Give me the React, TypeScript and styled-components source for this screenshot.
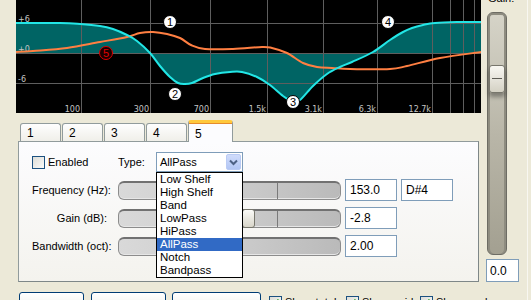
import React from 'react'
import styled, { createGlobalStyle, css } from 'styled-components'

const GlobalStyle = createGlobalStyle`
  html, body {
    margin: 0;
    padding: 0;
    background: #ece9d8;
  }
  body {
    font-family: 'Liberation Sans', Arial, sans-serif;
    font-size: 11px;
    color: #000;
    overflow: hidden;
  }
`

const Window = styled.div`
  display: flex;
  align-items: flex-start;
  width: 527px;
  height: 300px;
  overflow: hidden;
  border-right: 1px solid #f8f7f1;
  background: #ece9d8;
`
const Main = styled.div`
  display: flex;
  flex-direction: column;
  width: 481px;
  flex-shrink: 0;
`
const GraphBox = styled.svg`
  display: block;
  margin-left: 16px;
  width: 465px;
  height: 113px;
  background: #000;
`
const TabRow = styled.div`
  display: flex;
  align-items: flex-end;
  gap: 1px;
  height: 21px;
  margin: 7px 0 0 20px;
`
const Tab = styled.div<{ $active?: boolean }>`
  box-sizing: border-box;
  width: 41px;
  height: 18px;
  padding: 3px 0 0 6px;
  border: 1px solid #919b9c;
  border-bottom: none;
  border-radius: 3px 3px 0 0;
  background: linear-gradient(to bottom, #fefefe, #f0efe9);
  font-size: 12px;
  line-height: 13px;

  ${({ $active }) =>
    $active &&
    css`
      position: relative;
      z-index: 2;
      width: 45px;
      height: 22px;
      margin-bottom: -1px;
      padding-top: 5px;
      border-top: 3px solid #ffc83c;
      box-shadow: inset 0 1px 0 #e68b2c;
      background: #fcfcfe;
    `}
`
const Panel = styled.div`
  box-sizing: border-box;
  width: 461px;
  height: 141px;
  margin-left: 18px;
  padding: 10px 0 0 13px;
  border: 1px solid #919b9c;
  border-right-color: #7e8788;
  border-bottom-color: #7e8788;
  background: linear-gradient(to bottom, #fcfcfe, #f4f3ee);
`
const TopLine = styled.div`
  display: flex;
  align-items: center;
  height: 20px;
`
const CheckLabel = styled.label`
  display: flex;
  align-items: center;
  gap: 3px;
  width: 86px;
`
const Box = styled.span`
  position: relative;
  box-sizing: border-box;
  width: 13px;
  height: 13px;
  border: 1px solid #1c5180;
  background: linear-gradient(135deg, #dcdcd7, #fbfbf9);
  flex-shrink: 0;
`
const TypeLabel = styled.span`
  width: 38px;
`
const Select = styled.div`
  position: relative;
  box-sizing: border-box;
  display: flex;
  align-items: center;
  width: 87px;
  height: 20px;
  padding-left: 3px;
  border: 1px solid #7f9db9;
  background: #fff;
`
const SelectValue = styled.span`
  flex: 1;
`
const DropButton = styled.span`
  display: flex;
  align-items: center;
  justify-content: center;
  box-sizing: border-box;
  width: 15px;
  height: 16px;
  margin-right: 1px;
  border: 1px solid #bacbf4;
  border-radius: 2px;
  background: linear-gradient(to bottom, #d0dcfb, #b2c6f4);
`
const DropList = styled.ul`
  position: absolute;
  top: 19px;
  left: -1px;
  z-index: 5;
  box-sizing: border-box;
  width: 87px;
  margin: 0;
  padding: 0;
  list-style: none;
  border: 1px solid #000;
  background: #fff;
`
const DropItem = styled.li<{ $selected?: boolean }>`
  height: 13px;
  line-height: 13px;
  padding-left: 3px;
  font-size: 11.5px;
  ${({ $selected }) =>
    $selected &&
    css`
      background: #316ac5;
      color: #fff;
    `}
`
const Fields = styled.div`
  display: grid;
  grid-template-columns: 82px 223px 52px 52px;
  grid-auto-rows: 22px;
  column-gap: 4px;
  row-gap: 6px;
  margin-top: 7px;
  align-items: center;
`
const FieldLabel = styled.span`
  padding-right: 7px;
  text-align: right;
  white-space: nowrap;
`
const Track = styled.div<{ $mark?: boolean }>`
  position: relative;
  box-sizing: border-box;
  height: 19px;
  border: 1px solid #8c8c8c;
  border-top: 2px solid #717171;
  border-radius: 6px;
  background: linear-gradient(to right, #d9d9d9, #c9c9c9 60%, #bababa);
  box-shadow: inset 0 -1px 0 #e6e6e6;

  ${({ $mark }) =>
    $mark &&
    css`
      &::after {
        content: '';
        position: absolute;
        left: 158px;
        top: 0;
        bottom: 0;
        width: 1px;
        background: #7a7a7a;
      }
    `}
`
const Thumb = styled.div`
  position: absolute;
  top: -2px;
  left: 123px;
  z-index: 1;
  box-sizing: border-box;
  width: 13px;
  height: 19px;
  border: 1px solid #77766c;
  border-radius: 3px;
  background: linear-gradient(to bottom, #fbfbf8, #d8d5c9);
`
const Field = styled.div`
  box-sizing: border-box;
  height: 22px;
  padding: 3px 0 0 4px;
  border: 1px solid #7f9db9;
  background: #fff;
  font-size: 12px;
`
const Empty = styled.span``

const ButtonRow = styled.div`
  display: flex;
  align-items: flex-start;
  margin: 10px 0 0 19px;
  white-space: nowrap;
`
const Button = styled.button<{ $w: number; $gap?: number }>`
  box-sizing: border-box;
  flex-shrink: 0;
  width: ${({ $w }) => $w}px;
  height: 23px;
  margin-right: ${({ $gap }) => $gap ?? 7}px;
  padding: 0;
  border: 1px solid #003c74;
  border-radius: 3px;
  background: linear-gradient(to bottom, #ffffff, #f0f0ea 80%, #d6d0c5);
  font-family: inherit;
  font-size: 11px;
  color: #000;
`
const ShowCheck = styled.label<{ $w: number }>`
  display: flex;
  align-items: flex-start;
  gap: 3px;
  width: ${({ $w }) => $w}px;
  margin-top: 4px;
  flex-shrink: 0;
`
const Tick = styled.svg`
  position: absolute;
  left: 1px;
  top: 1px;
`

const Side = styled.div`
  display: flex;
  flex-direction: column;
  margin-left: 6px;
`
const GainLabel = styled.span`
  height: 13px;
  margin-top: -8px;
  padding-left: 1px;
  line-height: 13px;
`
const VTrack = styled.div`
  position: relative;
  box-sizing: border-box;
  width: 20px;
  height: 243px;
  margin-top: 7px;
  border: 1px solid #6d6c64;
  border-radius: 6px;
  background: linear-gradient(to bottom, #d6d4c8, #b9b6a8 50%, #a3a091);
  box-shadow: inset 2px 0 0 #8e8c80, inset -2px 0 0 #8e8c80, inset 0 2px 0 #8e8c80;
`
const VThumb = styled.div`
  position: absolute;
  top: 52px;
  left: 1px;
  box-sizing: border-box;
  width: 16px;
  height: 28px;
  border: 1px solid #77766c;
  border-radius: 3px;
  background: linear-gradient(to bottom, #f8f7f2, #d4d1c4);
  box-shadow: 0 4px 4px rgba(0, 0, 0, 0.35);

  &::after {
    content: '';
    position: absolute;
    left: 2px;
    right: 2px;
    top: 12px;
    height: 1px;
    background: #5d5c55;
  }
`
const ValueBox = styled.div`
  box-sizing: border-box;
  width: 33px;
  height: 23px;
  margin: 4px 0 0 -1px;
  padding: 4px 0 0 3px;
  border: 1px solid #7f9db9;
  background: #fff;
  font-size: 12px;
`

type Pt = [number, number]

const smooth = (pts: Pt[]) => {
  let d = `M${pts[0][0]},${pts[0][1]}`
  for (let i = 0; i < pts.length - 1; i++) {
    const p0 = pts[i - 1] || pts[i]
    const p1 = pts[i]
    const p2 = pts[i + 1]
    const p3 = pts[i + 2] || p2
    const c1x = p1[0] + (p2[0] - p0[0]) / 6
    const c1y = p1[1] + (p2[1] - p0[1]) / 6
    const c2x = p2[0] - (p3[0] - p1[0]) / 6
    const c2y = p2[1] - (p3[1] - p1[1]) / 6
    d += ` C${c1x.toFixed(1)},${c1y.toFixed(1)} ${c2x.toFixed(1)},${c2y.toFixed(1)} ${p2[0]},${p2[1]}`
  }
  return d
}

const total: Pt[] = [
  [16, 23], [60, 23], [80, 24], [100, 26], [113, 29], [127, 35], [137, 41], [150, 53],
  [160, 66], [170, 77], [178, 83], [185, 84], [192, 83], [203, 78], [215, 74], [230, 72],
  [242, 72], [257, 77], [270, 85], [283, 96], [292, 101], [300, 100], [313, 86], [327, 74],
  [340, 67], [352, 62], [373, 52], [390, 40], [403, 32], [412, 28], [423, 25], [435, 23],
  [457, 22], [481, 22],
]

const band: Pt[] = [
  [16, 52], [33, 51], [67, 48], [100, 42], [127, 37], [140, 33], [153, 32], [167, 34],
  [180, 38], [191, 45], [205, 49], [233, 49], [262, 47], [272, 48], [287, 53], [303, 63],
  [317, 67], [332, 68], [350, 69], [390, 69], [407, 66], [440, 58], [481, 52],
]

const vLines = [81, 150, 210, 267, 323, 377, 432, 450, 463, 474]
const hLines = [23, 53, 83]
const freqLabels: [string, number][] = [
  ['100', 81], ['300', 150], ['700', 210], ['1.5k', 267], ['3.1k', 323], ['6.3k', 377], ['12.7k', 432],
]
const markers: [string, number, number][] = [
  ['1', 170, 22], ['2', 175, 94], ['3', 293, 102], ['4', 388, 22],
]

const Graph = () => (
  <GraphBox viewBox="16 0 465 113">
    <path d={`${smooth(total)} L481,53 L16,53 Z`} fill="#006464" />
    {vLines.map((x) => (
      <line key={x} x1={x + 0.5} y1={0} x2={x + 0.5} y2={113} stroke="#5e5e5e" />
    ))}
    {hLines.map((y) => (
      <line key={y} x1={16} y1={y + 0.5} x2={481} y2={y + 0.5} stroke="#5e5e5e" />
    ))}
    <g fill="#c4c4c4" fontFamily="'DejaVu Sans', sans-serif" fontSize="8">
      <text x={18} y={22}>+6</text>
      <text x={18} y={52}>+0</text>
      <text x={18} y={82}>-6</text>
      {freqLabels.map(([t, x]) => (
        <text key={t} x={x - 1} y={112} textAnchor="end">{t}</text>
      ))}
    </g>
    <path d={smooth(band)} fill="none" stroke="#ff7f42" strokeWidth={2} />
    <path d={smooth(total)} fill="none" stroke="#22e6e6" strokeWidth={2} />
    {markers.map(([n, x, y]) => (
      <g key={n}>
        <circle cx={x} cy={y} r={6.5} fill="#fff" stroke="#000" />
        <text x={x} y={y + 4} textAnchor="middle" fontSize="11" fontFamily="'Liberation Sans', sans-serif">{n}</text>
      </g>
    ))}
    <circle cx={106} cy={53} r={6.5} fill="#1a0000" stroke="#e00000" />
    <text x={106} y={57} textAnchor="middle" fontSize="11" fill="#e00000" fontFamily="'Liberation Sans', sans-serif">5</text>
  </GraphBox>
)

const Check = ({ checked }: { checked?: boolean }) => (
  <Box>
    {checked && (
      <Tick width="9" height="9" viewBox="0 0 9 9">
        <path d="M1.5 4 L3.5 6.5 L7.5 1.5" fill="none" stroke="#21a121" strokeWidth="1.8" />
      </Tick>
    )}
  </Box>
)

const types = ['Low Shelf', 'High Shelf', 'Band', 'LowPass', 'HiPass', 'AllPass', 'Notch', 'Bandpass']

const App = () => {
  return (
    <Window>
      <GlobalStyle />
      <Main>
        <Graph />
        <TabRow>
          <Tab>1</Tab>
          <Tab>2</Tab>
          <Tab>3</Tab>
          <Tab>4</Tab>
          <Tab $active>5</Tab>
        </TabRow>
        <Panel>
          <TopLine>
            <CheckLabel>
              <Check />
              Enabled
            </CheckLabel>
            <TypeLabel>Type:</TypeLabel>
            <Select>
              <SelectValue>AllPass</SelectValue>
              <DropButton>
                <svg width="9" height="7" viewBox="0 0 9 7">
                  <path d="M1 1.5 L4.5 5 L8 1.5" fill="none" stroke="#4d6185" strokeWidth="2" />
                </svg>
              </DropButton>
              <DropList>
                {types.map((t) => (
                  <DropItem key={t} $selected={t === 'AllPass'}>{t}</DropItem>
                ))}
              </DropList>
            </Select>
          </TopLine>
          <Fields>
            <FieldLabel>Frequency (Hz):</FieldLabel>
            <Track $mark />
            <Field>153.0</Field>
            <Field>D#4</Field>

            <FieldLabel>Gain (dB):</FieldLabel>
            <Track $mark>
              <Thumb />
            </Track>
            <Field>-2.8</Field>
            <Empty />

            <FieldLabel>Bandwidth (oct):</FieldLabel>
            <Track />
            <Field>2.00</Field>
            <Empty />
          </Fields>
        </Panel>
        <ButtonRow>
          <Button $w={65}>Add band</Button>
          <Button $w={75} $gap={6}>Remove band</Button>
          <Button $w={89} $gap={8}>Reset defaults</Button>
          <ShowCheck $w={77}>
            <Check checked />
            Show total
          </ShowCheck>
          <ShowCheck $w={74}>
            <Check checked />
            Show guide
          </ShowCheck>
          <ShowCheck $w={80}>
            <Check checked />
            Show peaks
          </ShowCheck>
        </ButtonRow>
      </Main>
      <Side>
        <GainLabel>Gain:</GainLabel>
        <VTrack>
          <VThumb />
        </VTrack>
        <ValueBox>0.0</ValueBox>
      </Side>
    </Window>
  )
}

export default App
